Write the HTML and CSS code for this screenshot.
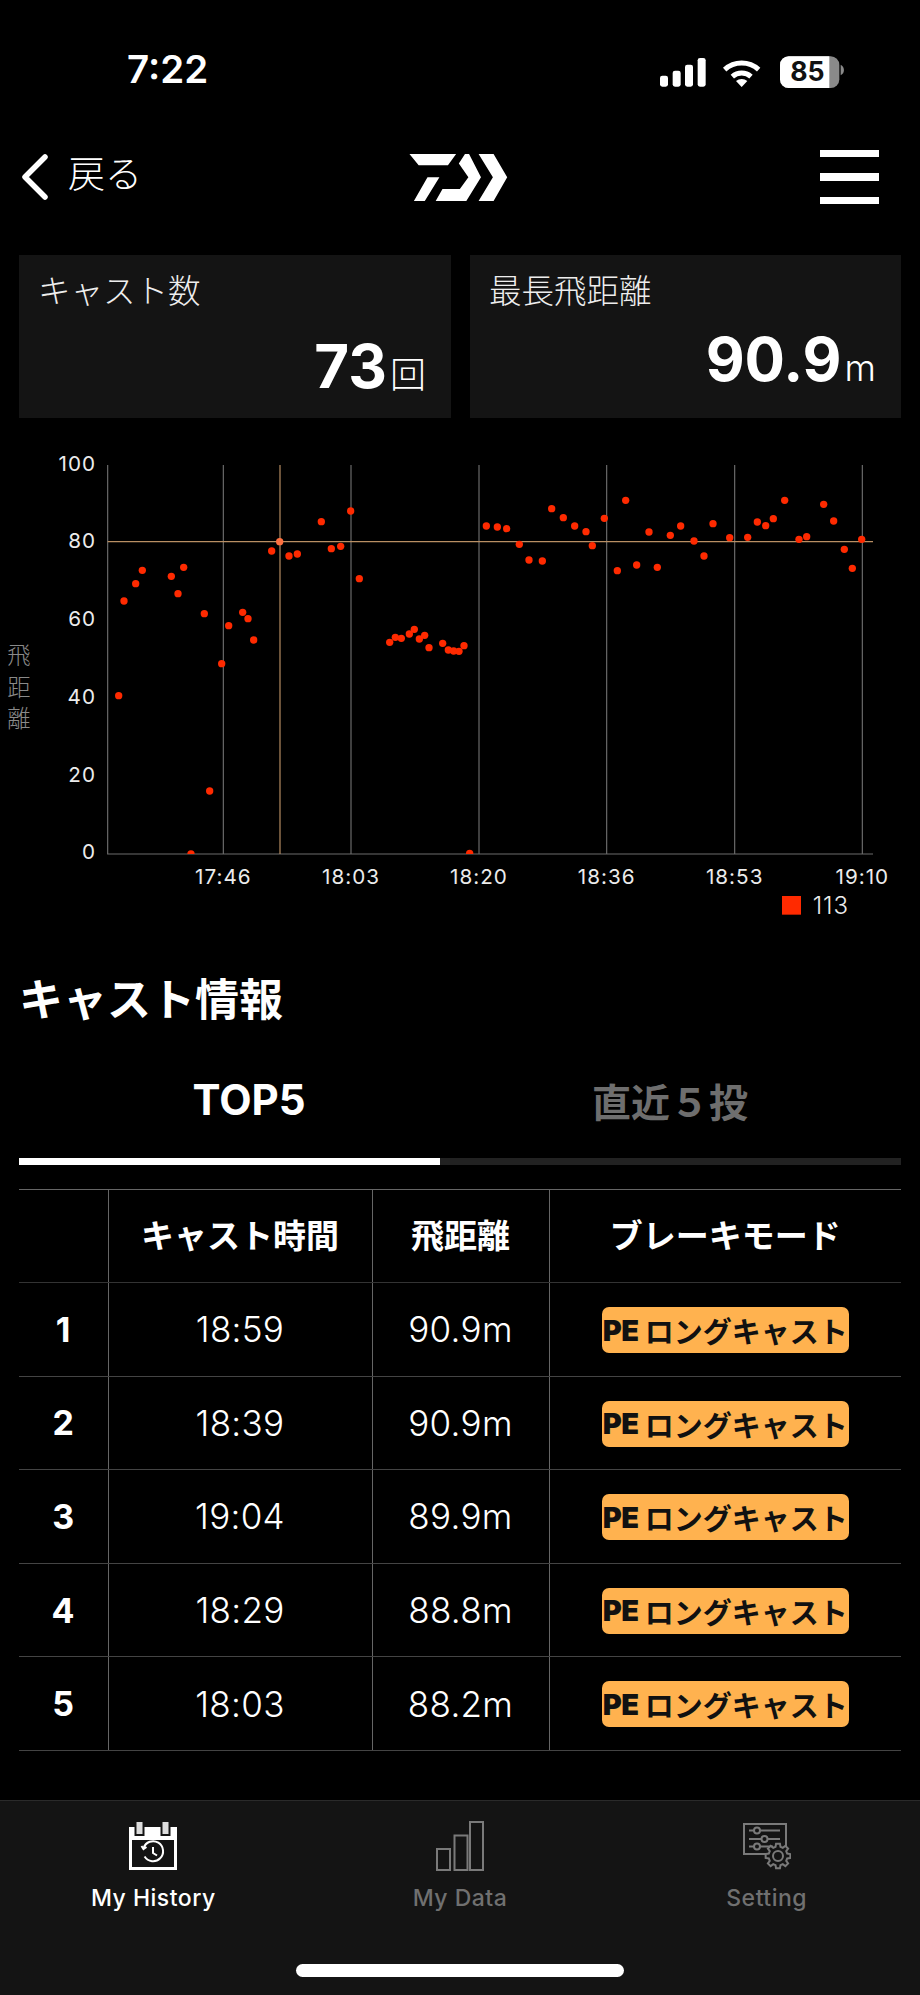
FILE: index.html
```html
<!DOCTYPE html>
<html lang="ja">
<head>
  <meta charset="UTF-8">
  <meta name="viewport" content="width=device-width, initial-scale=1.0">
  <title>キャスト情報</title>
  <link rel="stylesheet" href="styles.css">
</head>
<body>
  <div class="status-bar">
    <span class="clock">7:22</span>
    <svg class="status-icons" viewBox="0 0 720 210" width="240" height="70">
      <rect x="60" y="125" width="24" height="33" rx="7"/>
      <rect x="98" y="110" width="24" height="48" rx="7"/>
      <rect x="135" y="92" width="24" height="66" rx="7"/>
      <rect x="173" y="72" width="24" height="86" rx="7"/>
      <path class="wifi" d="M254 107a76 76 0 0 1 102 0M277 128a42 42 0 0 1 56 0"/>
      <path d="M288 141a26 26 0 0 1 34 0l-17 18z"/>
      <rect x="420" y="67" width="178" height="95" rx="26" fill="#8a8a8a"/>
      <path d="M446 67h122v95h-122a26 26 0 0 1-26-26v-43a26 26 0 0 1 26-26z" fill="#fff"/>
      <path d="M602 92a18 18 0 0 1 0 32z" fill="#8a8a8a"/>
      <text class="battery-level" x="502" y="142">85</text>
    </svg>
  </div>

  <header class="top-bar">
    <a class="back">
      <svg viewBox="0 0 28 46" width="28" height="46"><path d="M25 3L5 23l20 20"/></svg>
      <span>戻る</span>
    </a>
    <svg class="logo" viewBox="95 72 288 138" width="99" height="47">
      <path d="M95 72h137l-24 33h-86zM148 140h35l-43 70h-32zM258 72h12l35 68-43 70h-90l20-35h51l25-35-28-40zM298 72h44l40 68-40 70h-44l42-70z"/>
    </svg>
    <div class="menu"><i></i><i></i><i></i></div>
  </header>

  <section class="stats">
    <div class="stat-card">
      <div class="stat-title">キャスト数</div>
      <div class="stat-value count">73<small>回</small></div>
    </div>
    <div class="stat-card">
      <div class="stat-title">最長飛距離</div>
      <div class="stat-value">90.9<small>m</small></div>
    </div>
  </section>

  <svg class="chart" viewBox="0 0 2760 1500" width="920" height="500">
    <defs>
      <clipPath id="plot"><rect x="0" y="0" width="2760" height="1242"/></clipPath>
    </defs>
    <!-- grid -->
    <path class="grid" d="M323 75V1242H2619M670 75V1242M1053 75V1242M1437 75V1242M1820 75V1242M2204 75V1242M2587 75V1242"/>
    <path class="crosshair" d="M840 75V1242M323 305H2619"/>

    <!-- y axis -->
    <g class="axis-y">
      <text x="288" y="92">100</text>
      <text x="288" y="325">80</text>
      <text x="288" y="558">60</text>
      <text x="288" y="792">40</text>
      <text x="288" y="1025">20</text>
      <text x="288" y="1257">0</text>
    </g>
    <g class="axis-title">
      <text x="57" y="672">飛</text>
      <text x="57" y="767">距</text>
      <text x="57" y="860">離</text>
    </g>

    <!-- x axis -->
    <g class="axis-x">
      <text x="670" y="1332">17:46</text>
      <text x="1053" y="1332">18:03</text>
      <text x="1437" y="1332">18:20</text>
      <text x="1820" y="1332">18:36</text>
      <text x="2204" y="1332">18:53</text>
      <text x="2587" y="1332">19:10</text>
    </g>

    <!-- casts -->
    <g class="dots" clip-path="url(#plot)">
      <circle cx="356" cy="767" r="11"/><circle cx="372" cy="483" r="11"/><circle cx="407" cy="431" r="11"/>
      <circle cx="427" cy="391" r="11"/><circle cx="514" cy="409" r="11"/><circle cx="534" cy="461" r="11"/>
      <circle cx="551" cy="382" r="11"/><circle cx="613" cy="521" r="11"/><circle cx="629" cy="1053" r="11"/>
      <circle cx="573" cy="1242" r="11"/><circle cx="665" cy="671" r="11"/><circle cx="686" cy="557" r="11"/>
      <circle cx="728" cy="517" r="11"/><circle cx="744" cy="536" r="11"/><circle cx="761" cy="600" r="11"/>
      <circle cx="815" cy="333" r="11"/><circle class="selected" cx="839" cy="305" r="11"/><circle cx="867" cy="348" r="11"/>
      <circle cx="892" cy="342" r="11"/><circle cx="964" cy="245" r="11"/><circle cx="994" cy="326" r="11"/>
      <circle cx="1022" cy="319" r="11"/><circle cx="1052" cy="213" r="11"/><circle cx="1078" cy="416" r="11"/>
      <circle cx="1169" cy="607" r="11"/><circle cx="1186" cy="592" r="11"/><circle cx="1204" cy="595" r="11"/>
      <circle cx="1228" cy="582" r="11"/><circle cx="1243" cy="568" r="11"/><circle cx="1258" cy="597" r="11"/>
      <circle cx="1274" cy="586" r="11"/><circle cx="1287" cy="623" r="11"/><circle cx="1328" cy="610" r="11"/>
      <circle cx="1345" cy="630" r="11"/><circle cx="1361" cy="633" r="11"/><circle cx="1377" cy="634" r="11"/>
      <circle cx="1392" cy="617" r="11"/><circle cx="1409" cy="1240" r="11"/><circle cx="1459" cy="258" r="11"/>
      <circle cx="1492" cy="261" r="11"/><circle cx="1520" cy="266" r="11"/><circle cx="1558" cy="313" r="11"/>
      <circle cx="1587" cy="360" r="11"/><circle cx="1627" cy="363" r="11"/><circle cx="1655" cy="206" r="11"/>
      <circle cx="1690" cy="233" r="11"/><circle cx="1724" cy="258" r="11"/><circle cx="1758" cy="275" r="11"/>
      <circle cx="1777" cy="317" r="11"/><circle cx="1813" cy="235" r="11"/><circle cx="1852" cy="392" r="11"/>
      <circle cx="1877" cy="181" r="11"/><circle cx="1910" cy="375" r="11"/><circle cx="1947" cy="276" r="11"/>
      <circle cx="1972" cy="382" r="11"/><circle cx="2011" cy="286" r="11"/><circle cx="2042" cy="258" r="11"/>
      <circle cx="2082" cy="303" r="11"/><circle cx="2112" cy="348" r="11"/><circle cx="2139" cy="251" r="11"/>
      <circle cx="2189" cy="293" r="11"/><circle cx="2243" cy="292" r="11"/><circle cx="2272" cy="246" r="11"/>
      <circle cx="2297" cy="257" r="11"/><circle cx="2320" cy="236" r="11"/><circle cx="2354" cy="181" r="11"/>
      <circle cx="2397" cy="298" r="11"/><circle cx="2420" cy="290" r="11"/><circle cx="2471" cy="193" r="11"/>
      <circle cx="2501" cy="243" r="11"/><circle cx="2533" cy="328" r="11"/><circle cx="2557" cy="385" r="11"/>
      <circle cx="2585" cy="298" r="11"/>
    </g>

    <!-- legend -->
    <rect class="legend-mark" x="2346" y="1368" width="57" height="56"/>
    <text class="legend-text" x="2438" y="1422">113</text>
  </svg>

  <h2 class="section-title">キャスト情報</h2>

  <div class="tabs">
    <div class="tab active">TOP5</div>
    <div class="tab">直近５投</div>
  </div>
  <div class="tab-bar"><div class="tab-bar-fill"></div></div>

  <table class="casts">
    <thead>
      <tr><th class="rank"></th><th class="time">キャスト時間</th><th class="dist">飛距離</th><th>ブレーキモード</th></tr>
    </thead>
    <tbody>
      <tr><td class="rank">1</td><td>18:59</td><td>90.9m</td><td><span class="badge"><b>PE</b>ロングキャスト</span></td></tr>
      <tr><td class="rank">2</td><td>18:39</td><td>90.9m</td><td><span class="badge"><b>PE</b>ロングキャスト</span></td></tr>
      <tr><td class="rank">3</td><td>19:04</td><td>89.9m</td><td><span class="badge"><b>PE</b>ロングキャスト</span></td></tr>
      <tr><td class="rank">4</td><td>18:29</td><td>88.8m</td><td><span class="badge"><b>PE</b>ロングキャスト</span></td></tr>
      <tr><td class="rank">5</td><td>18:03</td><td>88.2m</td><td><span class="badge"><b>PE</b>ロングキャスト</span></td></tr>
    </tbody>
  </table>

  <nav class="tab-nav">
    <div class="nav-items">
      <a class="nav-item active">
        <svg viewBox="0 0 48 48" width="48" height="48">
          <rect x="0" y="5" width="48" height="43" fill="#fff"/>
          <rect x="3" y="18" width="42" height="27" fill="#141414"/>
          <rect x="5.5" y="0" width="10" height="14" fill="#141414"/>
          <rect x="31.5" y="0" width="10" height="14" fill="#141414"/>
          <rect x="7.5" y="0" width="6" height="12" fill="#ddd"/>
          <rect x="33.5" y="0" width="6" height="12" fill="#ddd"/>
          <path class="clock-face" d="M14.6 26a10 10 0 1 1 1 8.5M12.5 24l2 3 3-2M24 25v6l4 2.5"/>
        </svg>
        <span>My History</span>
      </a>
      <a class="nav-item">
        <svg class="line-icon" viewBox="0 0 48 50" width="48" height="50">
          <rect x="1" y="28" width="13" height="21"/>
          <rect x="18.5" y="14.5" width="13" height="34.5"/>
          <rect x="34" y="1" width="13" height="48"/>
        </svg>
        <span>My Data</span>
      </a>
      <a class="nav-item">
        <svg class="line-icon" viewBox="0 0 48 50" width="48" height="50">
          <rect x="1" y="3" width="42" height="30"/>
          <path d="M6 9.5h31M6 18h31M6 25.5h24"/>
          <circle class="knob" cx="14" cy="9.5" r="3"/>
          <circle class="knob" cx="21.5" cy="18" r="3"/>
          <circle class="knob" cx="14" cy="25.5" r="3"/>
          <g transform="translate(35 35)">
            <polygon class="knob" points="12.35,1.96 9.18,2.46 8.23,4.75 10.11,7.35 7.35,10.11 4.75,8.23 2.46,9.18 1.96,12.35 -1.96,12.35 -2.46,9.18 -4.75,8.23 -7.35,10.11 -10.11,7.35 -8.23,4.75 -9.18,2.46 -12.35,1.96 -12.35,-1.96 -9.18,-2.46 -8.23,-4.75 -10.11,-7.35 -7.35,-10.11 -4.75,-8.23 -2.46,-9.18 -1.96,-12.35 1.96,-12.35 2.46,-9.18 4.75,-8.23 7.35,-10.11 10.11,-7.35 8.23,-4.75 9.18,-2.46 12.35,-1.96"/>
            <circle r="5"/>
          </g>
        </svg>
        <span>Setting</span>
      </a>
    </div>
    <div class="home-indicator"></div>
  </nav>
</body>
</html>
```

FILE: styles.css
```css
* {
  box-sizing: border-box;
}
html, body {
  margin: 0;
  padding: 0;
}
body {
  width: 920px;
  height: 1995px;
  overflow: hidden;
  background: #000;
  color: #fff;
  font-family: Inter, 'Noto Sans CJK JP', sans-serif;
}
svg {
  display: block;
}

/* status bar */
.status-bar {
  height: 138px;
  display: flex;
  justify-content: space-between;
  align-items: center;
  padding: 0 40px 0 127px;
}
.clock {
  font-size: 38.5px;
  font-weight: 600;
}
.status-icons {
  fill: #fff;
}
.wifi {
  fill: none;
  stroke: #fff;
  stroke-width: 15;
}
.battery-level {
  fill: #111;
  font-size: 80px;
  font-weight: 700;
  text-anchor: middle;
}

/* top bar */
.top-bar {
  height: 78px;
  display: grid;
  grid-template-columns: 1fr auto 1fr;
  align-items: center;
  padding: 0 41px 0 20px;
}
.back {
  display: flex;
  align-items: center;
  gap: 20px;
  font-size: 37px;
  line-height: 40px;
  font-weight: 300;
}
.back span {
  margin-top: -5px;
}
.back svg {
  fill: none;
  stroke: #fff;
  stroke-width: 5.5;
  stroke-linecap: round;
  stroke-linejoin: round;
}
.logo {
  fill: #fff;
  margin-left: 18px;
}
.menu {
  justify-self: end;
  display: flex;
  flex-direction: column;
  gap: 16px;
}
.menu i {
  display: block;
  width: 59px;
  height: 7.5px;
  background: #fff;
}

/* summary cards */
.stats {
  display: grid;
  grid-template-columns: 432px 431px;
  gap: 19px;
  margin: 39px 19px 0;
}
.stat-card {
  height: 163px;
  background: #141414;
  padding: 15px 25px 0 19px;
}
.stat-title {
  font-size: 32.5px;
  font-weight: 300;
  line-height: 44px;
  color: #eee;
}
.stat-value {
  margin-top: 7px;
  text-align: right;
  font-size: 60px;
  line-height: 76px;
  font-weight: 700;
}
.stat-value small {
  font-size: 36px;
  font-weight: 300;
  margin-left: 3px;
}
.stat-value.count {
  margin-top: 14px;
}

/* chart */
.chart {
  margin-top: 22px;
}
.grid {
  fill: none;
  stroke: #6c6c6c;
  stroke-width: 3.5;
}
.crosshair {
  fill: none;
  stroke: #b98f63;
  stroke-width: 3.5;
}
.dots circle {
  fill: #ff2a00;
}
.dots .selected {
  fill: #ff7040;
}
.axis-y text,
.axis-x text {
  fill: #ececec;
  font-size: 62px;
  letter-spacing: 3px;
}
.legend-text {
  fill: #ececec;
  font-size: 72px;
  font-weight: 300;
  letter-spacing: 3px;
}
.axis-y text {
  text-anchor: end;
}
.axis-x text {
  text-anchor: middle;
}
.axis-title text {
  fill: #8a8a8a;
  font-size: 70px;
  font-weight: 300;
  text-anchor: middle;
}
.legend-mark {
  fill: #ff2a00;
}

/* cast info */
.section-title {
  margin: 10px 0 0 19px;
  height: 100px;
  font-size: 44px;
  line-height: 100px;
  font-weight: 700;
}
.tabs {
  display: grid;
  grid-template-columns: 460px 382px;
  margin: 0 19px;
  height: 108px;
  padding-bottom: 9px;
  align-items: center;
}
.tab {
  text-align: center;
  font-size: 39px;
  font-weight: 700;
  color: #6e6e6e;
}
.tab.active {
  color: #fff;
  font-size: 42px;
}
.tab-bar {
  height: 7px;
  margin: 0 19px;
  background: #222;
}
.tab-bar-fill {
  width: 421px;
  height: 100%;
  background: #fff;
}

/* cast table */
.casts {
  width: 882px;
  margin: 24px 19px 0;
  border-collapse: collapse;
  table-layout: fixed;
  border-top: 1px solid #666;
}
.casts th, .casts td {
  padding: 0;
  text-align: center;
  border-left: 1px solid #666;
  border-bottom: 1px solid #444;
}
.casts th:first-child, .casts td:first-child {
  border-left: none;
}
.casts th {
  height: 93px;
  padding-bottom: 4px;
  font-size: 33px;
  font-weight: 600;
  border-bottom-color: #333;
}
.casts td {
  height: 93.6px;
  font-size: 35px;
  font-weight: 300;
  letter-spacing: 0.3px;
}
.casts th.rank {
  width: 89px;
}
.casts th.time {
  width: 264px;
}
.casts th.dist {
  width: 177px;
}
.casts td.rank {
  font-size: 34px;
  font-weight: 700;
}
.badge {
  display: inline-flex;
  align-items: center;
  justify-content: center;
  width: 247px;
  height: 46px;
  background: #ffb24f;
  border-radius: 7px;
  color: #111;
  font-size: 29px;
  font-weight: 700;
  letter-spacing: 0;
  vertical-align: middle;
}
.badge b {
  margin-right: 6px;
  letter-spacing: -0.5px;
}

/* bottom navigation */
.tab-nav {
  position: fixed;
  left: 0;
  right: 0;
  bottom: 0;
  height: 195px;
  background: #141414;
  border-top: 1px solid #2a2a2a;
}
.nav-items {
  display: grid;
  grid-template-columns: repeat(3, 1fr);
  padding-top: 20px;
}
.nav-item {
  display: flex;
  flex-direction: column;
  align-items: center;
  color: #707070;
  font-size: 23px;
  font-weight: 500;
  letter-spacing: 0.5px;
}
.nav-item.active {
  color: #fff;
}
.nav-item svg {
  height: 50px;
}
.nav-item span {
  margin-top: 13px;
}
.line-icon {
  fill: none;
  stroke: #7a7a7a;
  stroke-width: 2;
}
.line-icon .knob {
  fill: #141414;
}
.clock-face {
  fill: none;
  stroke: #fff;
  stroke-width: 2;
}
.home-indicator {
  position: absolute;
  left: 296px;
  bottom: 18px;
  width: 328px;
  height: 13px;
  border-radius: 7px;
  background: #fff;
}
```
